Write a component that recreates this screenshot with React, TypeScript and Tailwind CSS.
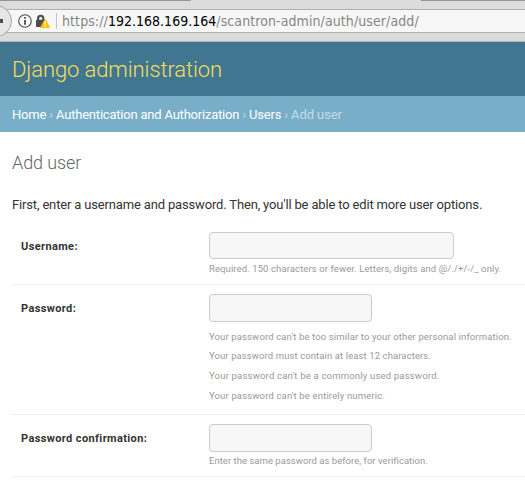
import React from "react";

function AddressBar() {
  return (
    <div className="relative h-[42px] overflow-hidden border-b border-[#b0b0b0] bg-[#dcdcdc] pt-[9px]">
      <div className="absolute left-0 top-0 h-px w-[191px] bg-[#989696]" />
      <div className="absolute right-0 top-0 h-px w-[104px] bg-[#989696]" />
      <div className="flex h-6 items-center border-y border-[#b0b0b0] bg-[#f7f7f7] pl-[18px]">
        <svg width="14" height="14" viewBox="0 0 14 14" className="shrink-0">
          <circle cx="7" cy="7" r="6.3" fill="none" stroke="#4c4c4c" strokeWidth="1.1" />
          <path d="M6.1 6h1.8v4.8H6.1zM6.1 3h1.8v1.8H6.1z" fill="#4c4c4c" />
        </svg>
        <svg width="15" height="15" viewBox="0 0 15 15" className="ml-[3px] shrink-0">
          <path d="M3.1 7V4.4a2.6 2.6 0 0 1 5.2 0V7" fill="none" stroke="#4c4c4c" strokeWidth="2.1" />
          <rect x="1" y="5.7" width="9" height="7.3" rx="1" fill="#4c4c4c" />
          <path d="M10.1 4.3 14.9 13Q15 14 14.2 14H6Q5.1 14 5.4 13Z" fill="#ffbf00" />
          <path d="M9.5 7.6h1.3v3.1H9.5zM9.5 11.6h1.3v1.3H9.5z" fill="#fff" />
        </svg>
        <div className="ml-[6px] h-4 w-px bg-[#c4c4c4]" />
        <span className="ml-[5px] whitespace-nowrap font-['DejaVu_Sans_Condensed','DejaVu_Sans',sans-serif] text-[14px] leading-5 tracking-[0.09px] text-[#858585] [font-stretch:condensed]">
          https://<span className="tracking-[0.02px] text-black">192.168.169.164</span>/scantron-admin/auth/user/add/
        </span>
      </div>
      <div className="absolute -left-[20px] top-[5px] flex h-[32px] w-[32px] items-center justify-end rounded-full border border-[#a8a8a8] bg-[#e6e6e6] pr-[8px]">
        <div className="h-1 w-2 bg-[#4c4c4c]" />
      </div>
    </div>
  );
}

const fieldClass = "block rounded-[4px] border border-[#ccc] bg-[#f7f7f7] outline-none";
const labelClass = "w-[188px] shrink-0 whitespace-nowrap pt-[7px] text-[11px] font-bold leading-4 tracking-[0.38px] text-[#333]";
const helpClass = "whitespace-nowrap text-[9.5px] leading-[14px] text-[#999]";

const passwordRules = [
  { text: "Your password can't be too similar to your other personal information.", className: "h-[19px] tracking-[0.13px]" },
  { text: "Your password must contain at least 12 characters.", className: "h-5 tracking-[0.1px]" },
  { text: "Your password can't be a commonly used password.", className: "h-5 tracking-[0.19px]" },
  { text: "Your password can't be entirely numeric.", className: "h-5 tracking-[0.15px]" },
];

export default function App() {
  return (
    <div className="h-[503px] w-[525px] overflow-hidden bg-white font-[Roboto,sans-serif] text-[13px] text-[#333]">
      <AddressBar />
      <header className="flex h-[54px] items-center bg-[#417690] px-3">
        <h1 className="whitespace-nowrap pt-px text-[22px] font-light leading-6 tracking-[-0.1px] text-[#f5dd5d]">Django administration</h1>
      </header>
      <nav className="flex h-9 items-center whitespace-pre bg-[#79aec8] px-3 pt-0.5 leading-4 tracking-[-0.19px] text-[#c4dce8]">
        <span className="text-white">Home</span> › <span className="tracking-[-0.21px] text-white">Authentication and Authorization</span> ›{" "}
        <span className="text-white">Users</span> › <span className="tracking-[-0.08px]">Add user</span>
      </nav>
      <main className="pl-3 pt-5">
        <h2 className="h-[42px] whitespace-nowrap text-[18px] font-light leading-[22px] tracking-[-0.1px] text-[#666]">Add user</h2>
        <p className="h-[28px] whitespace-nowrap pt-[3px] leading-4 tracking-[-0.16px]">First, enter a username and password. Then, you'll be able to edit more user options.</p>
        <form>
          <div className="flex h-[63px] border-b border-[#eee] pl-[9px] pt-[10px]">
            <label htmlFor="username" className={labelClass}>Username:</label>
            <div>
              <input id="username" className={fieldClass + " h-[27px] w-[245px]"} />
              <p className={helpClass + " mt-[3px] tracking-[0.1px]"}>Required. 150 characters or fewer. Letters, digits and @/./+/-/_ only.</p>
            </div>
          </div>
          <div className="flex h-[130px] border-b border-[#eee] pl-[9px] pt-[9px]">
            <label htmlFor="password" className={labelClass}>Password:</label>
            <div>
              <input id="password" type="password" className={fieldClass + " h-[28px] w-[163px]"} />
              <ul className={helpClass + " mt-2"}>
                {passwordRules.map((rule) => <li key={rule.text} className={rule.className}>{rule.text}</li>)}
              </ul>
            </div>
          </div>
          <div className="flex h-[62px] border-b border-[#eee] pl-[9px] pt-[9px]">
            <label htmlFor="confirm" className={labelClass}>Password confirmation:</label>
            <div>
              <input id="confirm" type="password" className={fieldClass + " h-[28px] w-[163px]"} />
              <p className={helpClass + " mt-[2px] tracking-[0.03px]"}>Enter the same password as before, for verification.</p>
            </div>
          </div>
        </form>
      </main>
    </div>
  );
}
